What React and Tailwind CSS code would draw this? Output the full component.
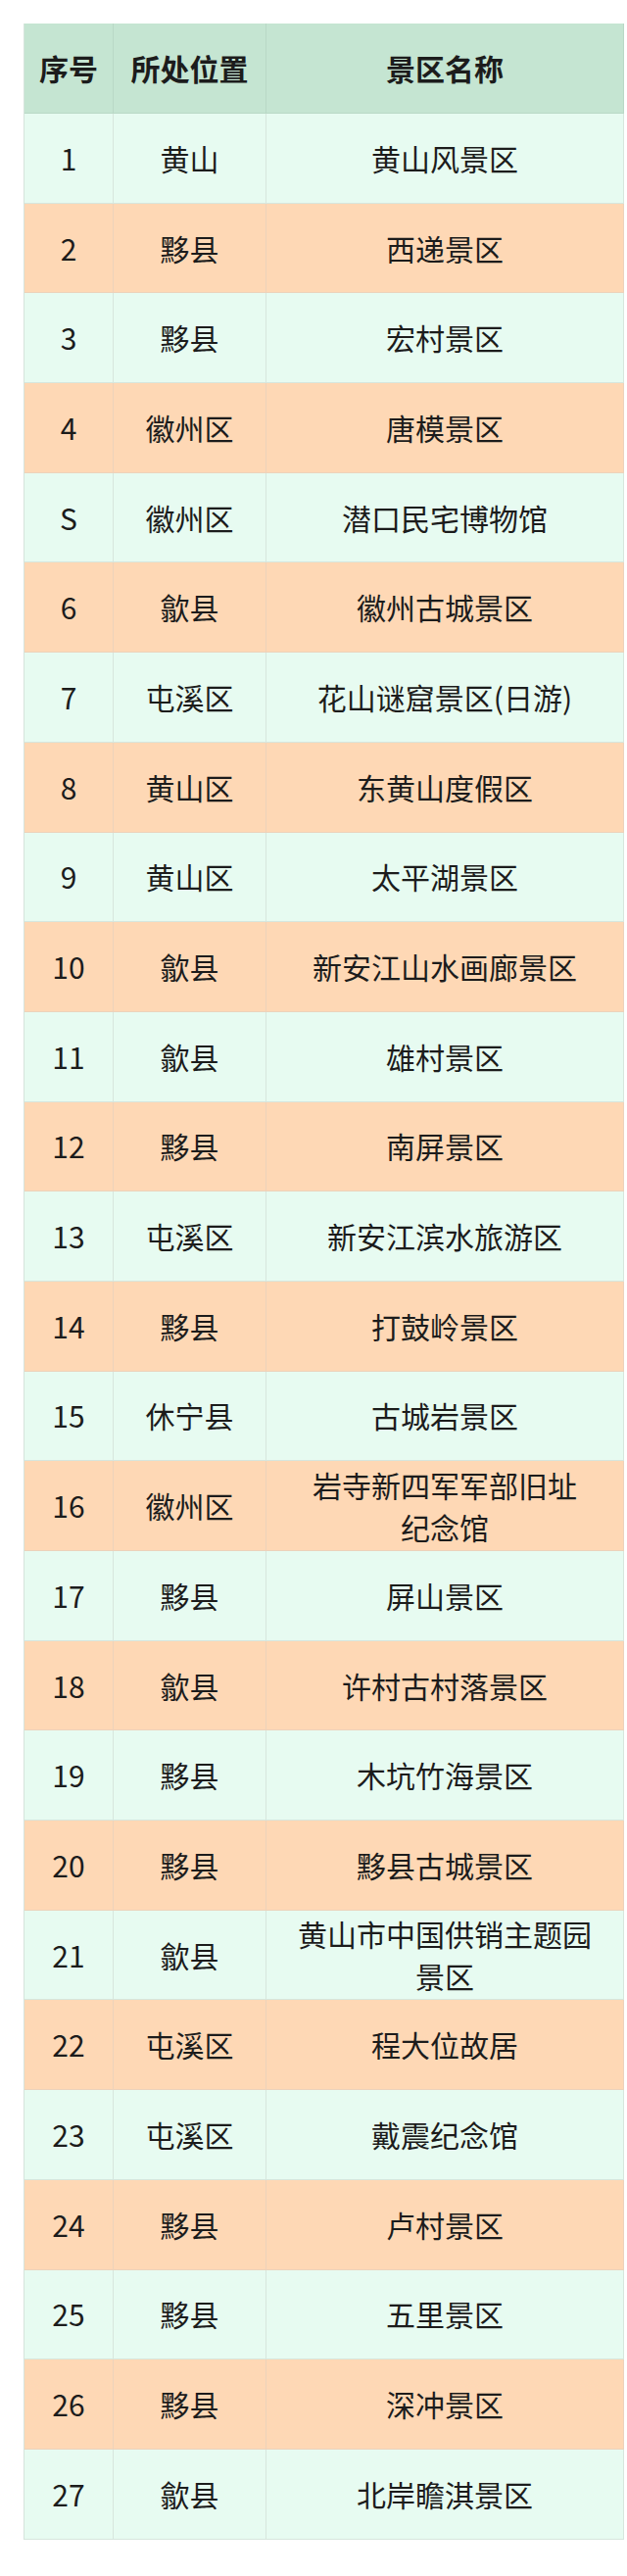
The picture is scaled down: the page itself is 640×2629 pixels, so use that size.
const rows = [
  ['1', '黄山', ['黄山风景区']],
  ['2', '黟县', ['西递景区']],
  ['3', '黟县', ['宏村景区']],
  ['4', '徽州区', ['唐模景区']],
  ['S', '徽州区', ['潜口民宅博物馆']],
  ['6', '歙县', ['徽州古城景区']],
  ['7', '屯溪区', ['花山谜窟景区(日游)']],
  ['8', '黄山区', ['东黄山度假区']],
  ['9', '黄山区', ['太平湖景区']],
  ['10', '歙县', ['新安江山水画廊景区']],
  ['11', '歙县', ['雄村景区']],
  ['12', '黟县', ['南屏景区']],
  ['13', '屯溪区', ['新安江滨水旅游区']],
  ['14', '黟县', ['打鼓岭景区']],
  ['15', '休宁县', ['古城岩景区']],
  ['16', '徽州区', ['岩寺新四军军部旧址', '纪念馆']],
  ['17', '黟县', ['屏山景区']],
  ['18', '歙县', ['许村古村落景区']],
  ['19', '黟县', ['木坑竹海景区']],
  ['20', '黟县', ['黟县古城景区']],
  ['21', '歙县', ['黄山市中国供销主题园', '景区']],
  ['22', '屯溪区', ['程大位故居']],
  ['23', '屯溪区', ['戴震纪念馆']],
  ['24', '黟县', ['卢村景区']],
  ['25', '黟县', ['五里景区']],
  ['26', '黟县', ['深冲景区']],
  ['27', '歙县', ['北岸瞻淇景区']],
]

const cell = 'flex items-center justify-center text-center'

export default function App() {
  return (
    <div
      className="min-h-[2629px] bg-white pt-[24px] pl-[24px] text-[#1c1c1c]"
      style={{ fontFamily: '"Noto Sans CJK SC", "Noto Sans", sans-serif' }}
    >
      <div className="w-[613px] border-l border-[#d6e4dc]">
        {/* header */}
        <div className="grid h-[92px] grid-cols-[91px_156px_1fr] border-b border-[#b9d8c6] bg-[#c5e5d2] text-[30px] font-bold">
          <div className={`${cell} border-r border-[#b9d8c6]`}>序号</div>
          <div className={`${cell} border-r border-[#b9d8c6]`}>所处位置</div>
          <div className={`${cell} border-r border-[#b9d8c6]`}>景区名称</div>
        </div>

        {rows.map(([no, place, name], i) => {
          const odd = i % 2 === 1
          return (
            <div
              key={no + i}
              className={`grid h-[91.7px] grid-cols-[91px_156px_1fr] border-b text-[30px] leading-[43px] ${
                odd ? 'border-[#ecd2bb] bg-[#fed8b5]' : 'border-[#d7e6dd] bg-[#e7fbf1]'
              }`}
            >
              <div className={`${cell} border-r ${odd ? 'border-[#ecd2bb]' : 'border-[#d7e6dd]'}`}>{no}</div>
              <div className={`${cell} border-r ${odd ? 'border-[#ecd2bb]' : 'border-[#d7e6dd]'}`}>{place}</div>
              <div className={`${cell} flex-col border-r ${odd ? 'border-[#ecd2bb]' : 'border-[#d7e6dd]'}`}>
                {name.map((line) => (
                  <span key={line}>{line}</span>
                ))}
              </div>
            </div>
          )
        })}
      </div>
    </div>
  )
}
